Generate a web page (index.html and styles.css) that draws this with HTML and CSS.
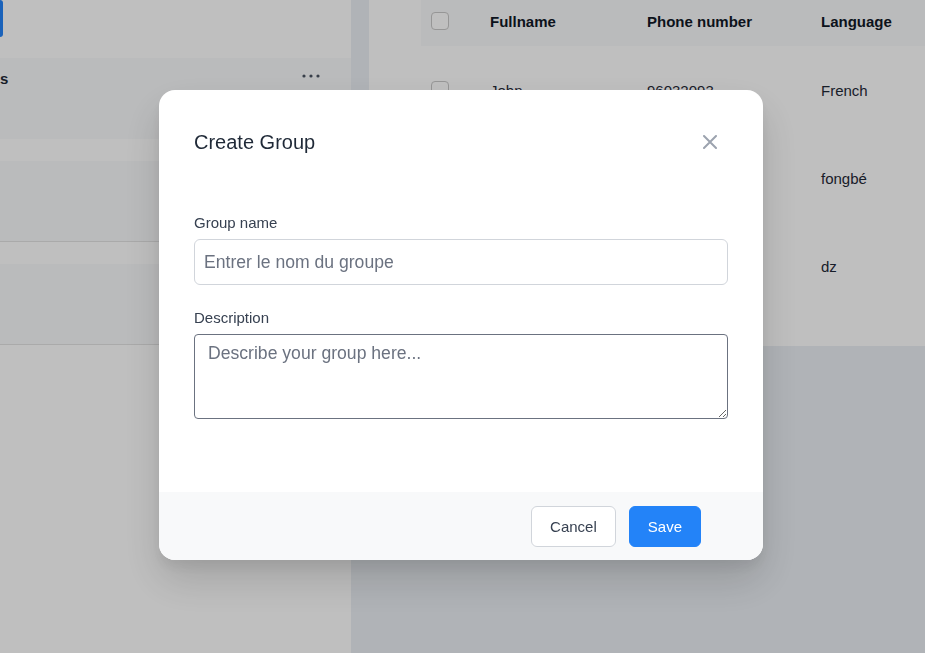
FILE: index.html
```html
<!DOCTYPE html>
<html lang="en">
<head>
  <meta charset="UTF-8" />
  <meta name="viewport" content="width=device-width, initial-scale=1" />
  <title>Groups</title>
  <link rel="stylesheet" href="styles.css">
</head>
<body>
  <div class="layout">
    <aside class="sidebar">
      <div class="sb-top">
        <button class="sb-new"></button>
      </div>
      <div class="sb-head">
        <span class="sb-title">s</span>
        <svg class="sb-more" width="18" height="4" viewBox="0 0 18 4">
          <circle cx="2" cy="2" r="1.6" />
          <circle cx="9" cy="2" r="1.6" />
          <circle cx="16" cy="2" r="1.6" />
        </svg>
      </div>
      <div class="sb-gap"></div>
      <div class="sb-card"></div>
      <div class="sb-gap"></div>
      <div class="sb-card"></div>
    </aside>

    <main class="main">
      <div class="panel">
        <div class="table">
          <div class="row head">
            <div class="cell check"><span class="box"></span></div>
            <div class="cell">Fullname</div>
            <div class="cell">Phone number</div>
            <div class="cell">Language</div>
          </div>
          <div class="row">
            <div class="cell check"><span class="box"></span></div>
            <div class="cell">John</div>
            <div class="cell">96032093</div>
            <div class="cell">French</div>
          </div>
          <div class="row">
            <div class="cell check"><span class="box"></span></div>
            <div class="cell">Koffi</div>
            <div class="cell">97451230</div>
            <div class="cell">fongbé</div>
          </div>
          <div class="row">
            <div class="cell check"><span class="box"></span></div>
            <div class="cell">Amina</div>
            <div class="cell">66120458</div>
            <div class="cell">dz</div>
          </div>
        </div>
      </div>
    </main>
  </div>

  <div class="overlay">
    <div class="modal">
      <div class="modal-body">
        <div class="modal-header">
          <h2>Create Group</h2>
          <button class="close" aria-label="Close">
            <svg width="14" height="14" viewBox="0 0 14 14">
              <path d="M1 1L13 13M13 1L1 13" />
            </svg>
          </button>
        </div>

        <label class="field-label" for="group-name">Group name</label>
        <input id="group-name" class="input" type="text" placeholder="Entrer le nom du groupe">

        <label class="field-label second" for="group-desc">Description</label>
        <textarea id="group-desc" class="textarea" placeholder="Describe your group here..."></textarea>
      </div>
      <div class="modal-footer">
        <button class="btn cancel">Cancel</button>
        <button class="btn save">Save</button>
      </div>
    </div>
  </div>
</body>
</html>
```

FILE: styles.css
```css
body {
  margin: 0;
  font-family: 'Liberation Sans', Arial, sans-serif;
  background: #ebeff4;
  color: #1f2937;
  height: 100vh;
  overflow: hidden;
}

.layout {
  display: flex;
  height: 100vh;
}

/* sidebar */
.sidebar {
  width: 351px;
  flex-shrink: 0;
  background: #fff;
  overflow: hidden;
}

.sb-top {
  height: 58px;
}

.sb-new {
  display: block;
  width: 3px;
  height: 37px;
  padding: 0;
  border: none;
  border-radius: 0 5px 5px 0;
  background: #2383f8;
}

.sb-head {
  height: 81px;
  background: #f9fafb;
  display: flex;
  justify-content: space-between;
  align-items: flex-start;
  padding: 12px 31px 0 0;
  box-sizing: border-box;
}

.sb-title {
  font-size: 15px;
  font-weight: bold;
  line-height: 17px;
  color: #1f2937;
}

.sb-more {
  margin-top: 4px;
  fill: #4b5563;
}

.sb-gap {
  height: 22px;
}

.sb-card {
  height: 80px;
  background: #f9fafb;
  border-bottom: 1px solid #e3e3e3;
}

/* main panel */
.main {
  flex: 1;
  margin-left: 18px;
  min-width: 0;
}

.panel {
  background: #fff;
  height: 346px;
  padding-left: 52px;
  overflow: hidden;
}

.table {
  width: 560px;
}

.row {
  display: grid;
  grid-template-columns: 49px 157px 174px 1fr;
  align-items: center;
  height: 88px;
  font-size: 15px;
  color: #1f2937;
}

.row.head {
  height: 46px;
  box-sizing: border-box;
  padding-bottom: 4px;
  background: #f9fafb;
  font-weight: bold;
  color: #111827;
}

.cell {
  padding-left: 20px;
  white-space: nowrap;
}

.cell.check {
  padding-left: 10px;
  display: flex;
}

.box {
  width: 16px;
  height: 16px;
  border: 1px solid #c8c8c8;
  border-radius: 4px;
  background: #fff;
}

/* modal */
.overlay {
  position: fixed;
  inset: 0;
  background: rgba(0, 0, 0, 0.25);
  display: flex;
  justify-content: center;
  align-items: center;
  padding: 0 3px 3px 0;
}

.modal {
  width: 604px;
  background: #fff;
  border-radius: 16px;
  overflow: hidden;
  box-shadow: 0 20px 40px rgba(0, 0, 0, 0.15), 0 8px 12px rgba(0, 0, 0, 0.06);
}

.modal-body {
  padding: 38px 35px 73px 35px;
}

.modal-header {
  display: flex;
  justify-content: space-between;
  align-items: center;
  height: 28px;
  margin-bottom: 57px;
}

.modal-header h2 {
  margin: 0;
  font-size: 20px;
  font-weight: normal;
  color: #1f2937;
}

.close {
  border: none;
  background: none;
  padding: 0;
  margin-right: 11px;
  display: flex;
  cursor: pointer;
}

.close path {
  stroke: #9ca3af;
  stroke-width: 2;
  stroke-linecap: round;
}

.field-label {
  display: block;
  font-size: 15px;
  line-height: 20px;
  color: #374151;
  margin-bottom: 6px;
}

.field-label.second {
  margin-top: 23px;
}

.input,
.textarea {
  display: block;
  width: 100%;
  box-sizing: border-box;
  font-family: 'Liberation Sans', Arial, sans-serif;
  font-size: 17.6px;
  color: #1f2937;
  background: #fff;
}

.input {
  height: 46px;
  padding: 0 9px;
  border: 1px solid #d1d5db;
  border-radius: 6px;
}

.textarea {
  height: 85px;
  padding: 8px 13px;
  border: 1px solid #6b7280;
  border-radius: 4px;
  resize: vertical;
}

.input::placeholder,
.textarea::placeholder {
  color: #6b7280;
}

.modal-footer {
  background: #f8f9fa;
  height: 68px;
  padding: 14px 62px 13px;
  box-sizing: border-box;
  display: flex;
  justify-content: flex-end;
  gap: 13px;
}

.btn {
  height: 41px;
  padding: 0 18px;
  font-family: 'Liberation Sans', Arial, sans-serif;
  font-size: 15px;
  border-radius: 6px;
  cursor: pointer;
}

.btn.cancel {
  background: #fff;
  color: #374151;
  border: 1px solid #d1d5db;
}

.btn.save {
  background: #2383f8;
  color: #fff;
  border: 1px solid #2383f8;
}

.btn:hover {
  filter: brightness(95%);
}
```
